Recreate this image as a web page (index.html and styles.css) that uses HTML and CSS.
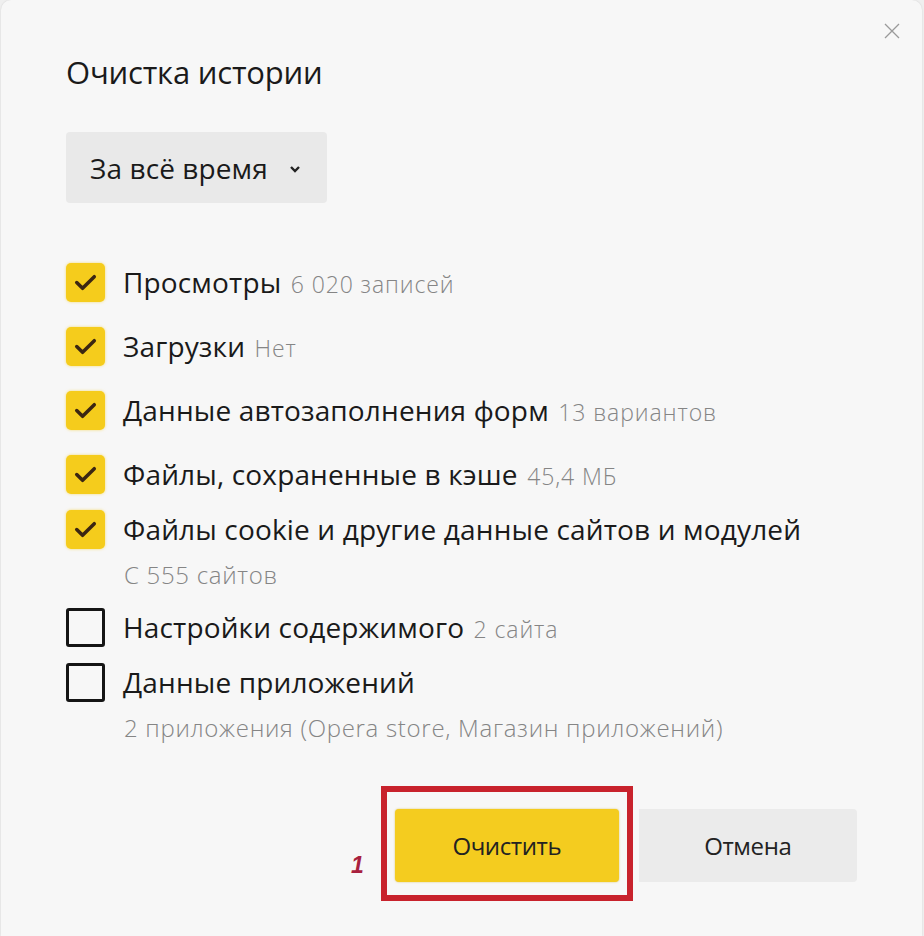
FILE: index.html
```html
<!DOCTYPE html>
<html lang="ru">
<head>
    <meta charset="UTF-8">
    <meta name="viewport" content="width=device-width, initial-scale=1.0">
    <title>Очистка истории</title>
    <link rel="stylesheet" href="styles.css">
</head>
<body>
    <div class="dialog">
        <button class="close-btn" aria-label="Закрыть">
            <svg width="16" height="16" viewBox="0 0 16 16"><path d="M1 1 L15 15 M15 1 L1 15" stroke="#9a9a9a" stroke-width="1.3" fill="none"/></svg>
        </button>

        <h1 class="title">Очистка истории</h1>

        <div class="period">
            <span>За всё время</span>
            <svg class="chevron" width="12" height="8" viewBox="0 0 12 8"><path d="M2 2 L6 6 L10 2" stroke="#222" stroke-width="2.4" fill="none"/></svg>
        </div>

        <div class="options">
            <div class="item">
                <span class="check checked"><svg viewBox="0 0 40 40"><path d="M11 20 L17 26 L29 14" /></svg></span>
                <span class="label">Просмотры <span class="note">6 020 записей</span></span>
            </div>
            <div class="item">
                <span class="check checked"><svg viewBox="0 0 40 40"><path d="M11 20 L17 26 L29 14" /></svg></span>
                <span class="label">Загрузки <span class="note">Нет</span></span>
            </div>
            <div class="item">
                <span class="check checked"><svg viewBox="0 0 40 40"><path d="M11 20 L17 26 L29 14" /></svg></span>
                <span class="label">Данные автозаполнения форм <span class="note">13 вариантов</span></span>
            </div>
            <div class="item">
                <span class="check checked"><svg viewBox="0 0 40 40"><path d="M11 20 L17 26 L29 14" /></svg></span>
                <span class="label">Файлы, сохраненные в кэше <span class="note">45,4 МБ</span></span>
            </div>
            <div class="item tight">
                <span class="check checked"><svg viewBox="0 0 40 40"><path d="M11 20 L17 26 L29 14" /></svg></span>
                <span class="label">Файлы cookie и другие данные сайтов и модулей</span>
            </div>
            <div class="sub">С 555 сайтов</div>
            <div class="item after-sub">
                <span class="check"></span>
                <span class="label">Настройки содержимого <span class="note">2 сайта</span></span>
            </div>
            <div class="item tight">
                <span class="check"></span>
                <span class="label">Данные приложений</span>
            </div>
            <div class="sub">2 приложения (Opera store, Магазин приложений)</div>
        </div>

        <div class="actions">
            <span class="step">1</span>
            <div class="highlight">
                <button class="btn btn-primary">Очистить</button>
            </div>
            <button class="btn btn-secondary">Отмена</button>
        </div>
    </div>
</body>
</html>
```

FILE: styles.css
```css
html, body {
    margin: 0;
    padding: 0;
}
body {
    background-color: #efefef;
    font-family: "Open Sans", "Noto Sans", sans-serif;
    color: #1a1a1a;
}
.dialog {
    position: relative;
    box-sizing: border-box;
    width: 921px;
    height: 936px;
    margin-left: 1px;
    padding: 52px 65px 0;
    background-color: #f7f7f7;
    border-radius: 10px 10px 0 0;
    box-shadow: 0 0 2px rgba(0, 0, 0, 0.12);
}
.close-btn {
    position: absolute;
    top: 23px;
    right: 22px;
    padding: 0;
    border: none;
    background: none;
    cursor: pointer;
}
.title {
    margin: 0;
    font-size: 31px;
    font-weight: 400;
    line-height: 40px;
    letter-spacing: -0.2px;
}
.period {
    display: inline-flex;
    align-items: center;
    box-sizing: border-box;
    margin-top: 40px;
    height: 71px;
    width: 261px;
    padding: 0 24px;
    background-color: #e9e9e9;
    border-radius: 4px;
    font-size: 28px;
    letter-spacing: 0.1px;
}
.chevron {
    margin-left: 21px;
    margin-top: 2px;
}
.options {
    display: flex;
    flex-direction: column;
    margin-top: 59px;
}
.item {
    display: flex;
    align-items: center;
    margin-top: 24px;
    height: 40px;
}
.item:first-child {
    margin-top: 0;
}
.item.tight {
    margin-top: 15px;
}
.item.after-sub {
    margin-top: 16px;
}
.check {
    box-sizing: border-box;
    flex: none;
    width: 39px;
    height: 39px;
    margin-right: 18px;
    border: 3px solid #151515;
    border-radius: 3px;
}
.check.checked {
    border: none;
    background-color: #f5cc1c;
    border-radius: 5px;
    box-shadow: 0 0 3px rgba(245, 204, 28, 0.6);
}
.check svg {
    display: block;
    width: 39px;
    height: 39px;
}
.check svg path {
    fill: none;
    stroke: #3b2612;
    stroke-width: 3.6;
    stroke-linecap: round;
    stroke-linejoin: round;
}
.label {
    font-size: 28px;
    letter-spacing: 0.15px;
    white-space: nowrap;
}
.note {
    margin-left: 2px;
    font-size: 23px;
    font-weight: 300;
    letter-spacing: 0.9px;
    color: #858585;
}
.sub {
    margin-top: 10px;
    padding-left: 123px;
    margin-left: -65px;
    font-size: 24px;
    font-weight: 300;
    letter-spacing: 0.7px;
    line-height: 32px;
    color: #858585;
}
.actions {
    display: flex;
    align-items: center;
    margin-top: 42px;
    margin-left: 285px;
}
.step {
    margin-right: 17px;
    margin-top: 44px;
    font-family: "Liberation Sans", sans-serif;
    font-size: 23px;
    font-weight: 700;
    font-style: italic;
    color: #a8203e;
}
.highlight {
    padding: 17px 8px 13px 8px;
    border: 6px solid #c8222c;
}
.btn {
    border: none;
    border-radius: 4px;
    height: 73px;
    font-family: "Open Sans", "Noto Sans", sans-serif;
    font-size: 24px;
    letter-spacing: -0.4px;
    color: #222;
    cursor: pointer;
}
.btn-primary {
    display: block;
    width: 224px;
    background-color: #f4cc1f;
    box-shadow: 0 0 2px rgba(200, 160, 0, 0.6);
}
.btn-secondary {
    width: 218px;
    margin-left: 6px;
    margin-top: 4px;
    background-color: #ebebeb;
    border-radius: 0 4px 4px 0;
}
```
